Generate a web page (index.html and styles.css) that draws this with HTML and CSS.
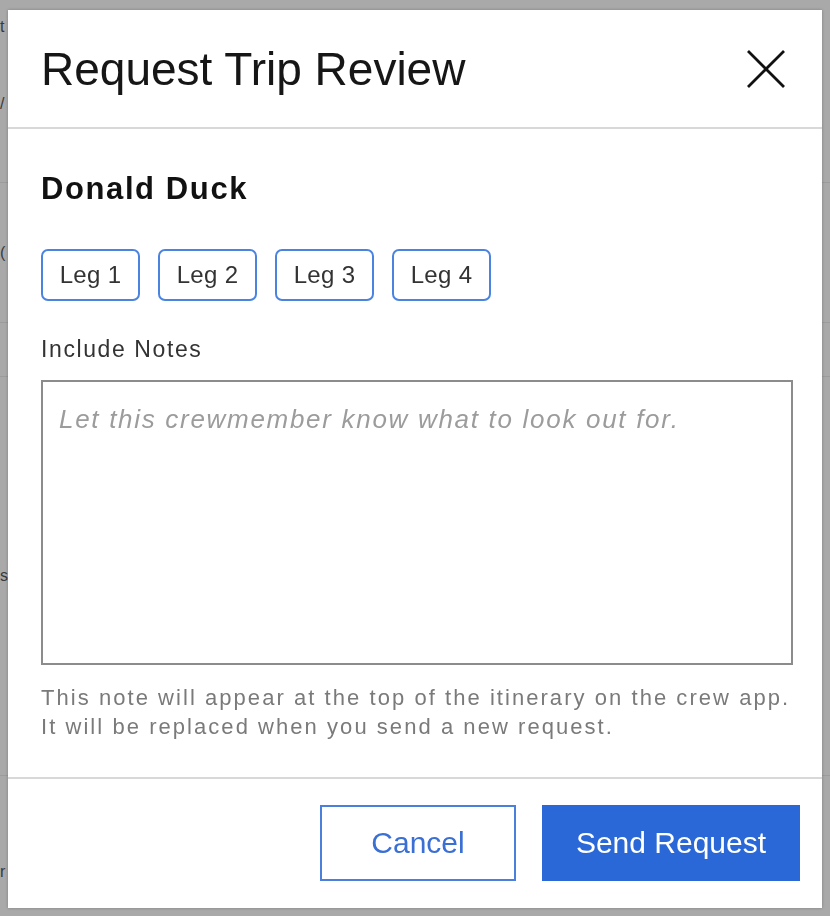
FILE: index.html
```html
<!DOCTYPE html>
<html lang="en">
<head>
    <meta charset="UTF-8">
    <title>Request Trip Review</title>
    <link rel="stylesheet" href="styles.css">
</head>
<body>
<div class="page">
    <div class="page-row r1"><span>t</span></div>
    <div class="page-row r2"><span>/</span></div>
    <div class="page-row r3"><span>(</span></div>
    <div class="page-row r4"></div>
    <div class="page-row r5"><span>s</span></div>
    <div class="page-row r6"><span>r</span></div>
</div>

<div class="modal">
    <div class="modal-header">
        <h1 class="modal-title">Request Trip Review</h1>
        <button class="close" title="Close">
            <svg width="40" height="40" viewBox="0 0 40 40">
                <path d="M2 2 L38 38 M38 2 L2 38" stroke="#111" stroke-width="2.8" fill="none"/>
            </svg>
        </button>
    </div>
    <div class="modal-body">
        <h2 class="crew-name">Donald Duck</h2>
        <div class="legs">
            <button class="leg">Leg 1</button>
            <button class="leg">Leg 2</button>
            <button class="leg">Leg 3</button>
            <button class="leg">Leg 4</button>
        </div>
        <label class="notes-label" for="notes">Include Notes</label>
        <textarea id="notes" class="notes" placeholder="Let this crewmember know what to look out for."></textarea>
        <p class="hint">This note will appear at the top of the itinerary on the crew app.<br>It will be replaced when you send a new request.</p>
    </div>
    <div class="modal-footer">
        <button class="btn btn-cancel">Cancel</button>
        <button class="btn btn-send">Send Request</button>
    </div>
</div>
</body>
</html>
```

FILE: styles.css
```css
html, body {
    margin: 0;
    height: 100%;
}

body {
    background: #a9a9a9;
    font-family: "Liberation Sans", Arial, sans-serif;
    overflow: hidden;
}

/* page behind the overlay, only its left edge shows */
.page {
    display: flex;
    flex-direction: column;
}

.page-row {
    display: flex;
    align-items: center;
    border-bottom: 1px solid #9c9c9c;
    color: #3a3a3a;
    font-size: 16px;
    line-height: 18px;
}

.r1 { height: 60px; border-bottom: none; align-items: flex-start; padding-top: 18px; height: 42px; }
.r2 { height: 87px; align-items: flex-start; padding-top: 35px; }
.r3 { height: 139px; }
.r4 { height: 53px; }
.r5 { height: 398px; }
.r6 { height: 105px; border-bottom: none; align-items: flex-end; padding-bottom: 35px; }

.modal {
    position: fixed;
    left: 8px;
    top: 10px;
    width: 814px;
    height: 898px;
    background: #fff;
    box-shadow: 0 0 3px rgba(0, 0, 0, 0.25);
    display: flex;
    flex-direction: column;
}

.modal-header {
    height: 117px;
    display: flex;
    align-items: center;
    justify-content: space-between;
    padding: 0 36px 0 33px;
    border-bottom: 2px solid #d8d8d8;
}

.modal-title {
    margin: 0;
    font-size: 46px;
    line-height: 46px;
    font-weight: normal;
    color: #161616;
}

.close {
    border: none;
    background: none;
    padding: 0;
    width: 40px;
    height: 40px;
    cursor: pointer;
}

.close svg {
    display: block;
}

.modal-body {
    padding: 42px 30px 36px 33px;
    display: flex;
    flex-direction: column;
    flex: 1;
}

.crew-name {
    margin: 0;
    font-size: 31px;
    line-height: 36px;
    font-weight: bold;
    letter-spacing: 1.6px;
    color: #111;
}

.legs {
    display: flex;
    gap: 18px;
    margin-top: 42px;
}

.leg {
    width: 99px;
    height: 52px;
    border: 2px solid #4a84e0;
    border-radius: 7px;
    background: #fff;
    font-family: "Liberation Sans", Arial, sans-serif;
    font-size: 24px;
    letter-spacing: 0.3px;
    color: #333;
    padding: 0;
}

.notes-label {
    margin-top: 34px;
    font-size: 23px;
    line-height: 28px;
    letter-spacing: 1.6px;
    color: #333;
}

.notes {
    margin-top: 17px;
    width: 752px;
    height: 285px;
    box-sizing: border-box;
    border: 2px solid #8c8c8c;
    border-radius: 0;
    padding: 22px 16px;
    resize: none;
    font-family: "Liberation Sans", Arial, sans-serif;
    font-size: 26px;
    letter-spacing: 1.7px;
    outline: none;
}

.notes::placeholder {
    color: #9c9c9c;
    font-style: italic;
}

.hint {
    margin: 18px 0 0;
    font-size: 22px;
    line-height: 29px;
    letter-spacing: 2.05px;
    color: #7a7a7a;
}

.modal-footer {
    display: flex;
    justify-content: flex-end;
    gap: 26px;
    padding: 26px 22px 27px;
    border-top: 2px solid #d8d8d8;
}

.btn {
    height: 76px;
    font-family: "Liberation Sans", Arial, sans-serif;
    font-size: 30px;
    cursor: pointer;
}

.btn-cancel {
    width: 196px;
    background: #fff;
    border: 2px solid #4a80dc;
    color: #3a6fd3;
}

.btn-send {
    width: 258px;
    background: #2a67d7;
    border: 2px solid #2a67d7;
    color: #fff;
}
```
